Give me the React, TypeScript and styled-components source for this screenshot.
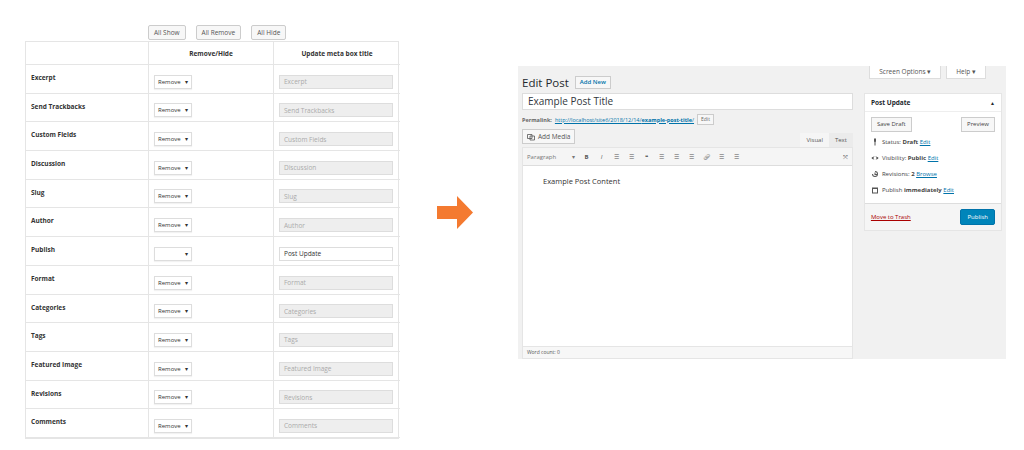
import React from "react";
import styled, { createGlobalStyle } from "styled-components";

const G = createGlobalStyle`
  body{margin:0;background:#fff;font-family:"Open Sans","Noto Sans",sans-serif;overflow:hidden;}
  #root{width:1024px;height:450px;overflow:hidden;}
`;
const Page = styled.div`display:flex;align-items:flex-start;height:450px;`;
const Left = styled.div`margin:25px 0 0 25px;width:374px;display:flex;flex-direction:column;`;
const TopBtns = styled.div`display:flex;gap:10px;padding-left:123px;height:16px;`;
const SmallBtn = styled.div`font-size:6.5px;color:#555;border:1px solid #ccc;background:#f7f7f7;padding:0 5px;height:13px;line-height:13px;border-radius:2px;`;
const Table = styled.div`display:grid;grid-template-columns:123px 125px 126px;border:1px solid #e5e5e5;`;
const Cell = styled.div<{ $h?: boolean }>`height:${p => (p.$h ? 23 : 28.7)}px;border-bottom:1px solid #e5e5e5;border-right:1px solid #e5e5e5;font-size:6.5px;display:flex;padding:0 5px;box-sizing:border-box;
  &:nth-child(3n){border-right:none;}`;
const HeadCell = styled(Cell)`justify-content:center;align-items:center;font-weight:700;color:#333;`;
const Label = styled(Cell)`font-weight:700;color:#333;padding-top:8px;`;
const Ctl = styled(Cell)`align-items:flex-end;padding-bottom:4px;`;
const Select = styled.div`width:38px;height:14px;border:1px solid #ddd;box-sizing:border-box;font-size:6px;color:#333;display:flex;align-items:center;justify-content:space-between;padding:0 3px;box-shadow:0 1px 1px rgba(0,0,0,.05);`;
const Input = styled.div<{ $on?: boolean }>`width:114px;height:14px;box-sizing:border-box;border:1px solid #ddd;background:${p => (p.$on ? "#fff" : "#eee")};color:${p => (p.$on ? "#333" : "#aaa")};font-size:6.5px;padding:0 4px;display:flex;align-items:center;`;
const ArrowWrap = styled.div`margin:196px 0 0 38px;width:36px;height:33px;`;
const Admin = styled.div`margin:66px 0 0 45px;width:488px;height:293px;background:#f1f1f1;display:flex;flex-direction:column;padding:0 4px;box-sizing:border-box;font-family:"Open Sans",sans-serif;`;
const TopRight = styled.div`display:flex;justify-content:flex-end;gap:5px;padding-right:16px;height:12px;`;
const Tab = styled.div`background:#fff;border:1px solid #ddd;border-top:none;font-size:6.5px;color:#555;padding:0 9px;height:12px;line-height:12px;`;
const HeadRow = styled.div`display:flex;align-items:center;gap:6px;margin-top:-3px;height:14px;`;
const H1 = styled.div`font-size:11.5px;color:#23282d;`;
const AddNew = styled.div`font-size:6px;color:#0073aa;border:1px solid #ccc;background:#f7f7f7;padding:0 4px;height:11px;line-height:11px;font-weight:600;`;
const Cols = styled.div`display:flex;gap:11px;margin-top:4px;flex:1;`;
const Main = styled.div`width:333px;display:flex;flex-direction:column;`;
const Title = styled.div`height:17px;background:#fff;border:1px solid #ddd;box-sizing:border-box;font-size:10px;color:#32373c;padding:0 5px;line-height:15px;`;
const Perma = styled.div`font-size:5.5px;color:#666;display:flex;align-items:center;gap:3px;margin-top:3px;height:13px;
  b{font-weight:700;} a{color:#0073aa;text-decoration:underline;}`;
const TinyBtn = styled.span`border:1px solid #ccc;background:#f7f7f7;padding:0 3px;height:9px;line-height:9px;font-size:5px;`;
const MediaRow = styled.div`display:flex;justify-content:space-between;align-items:flex-end;margin-top:3px;`;
const MediaBtn = styled.div`border:1px solid #ccc;background:#f7f7f7;font-size:6.5px;color:#555;height:13px;padding:0 4px;display:flex;align-items:center;gap:3px;margin-bottom:3px;`;
const Tabs = styled.div`display:flex;`;
const VT = styled.div<{ $a?: boolean }>`font-size:6px;color:#555;background:${p => (p.$a ? "#f5f5f5" : "#ebebeb")};padding:0 6px;height:14px;line-height:14px;`;
const Editor = styled.div`flex:1;display:flex;flex-direction:column;border:1px solid #e5e5e5;background:#fff;`;
const Toolbar = styled.div`height:17px;background:#f5f5f5;border-bottom:1px solid #ddd;display:flex;align-items:center;padding:0 4px;gap:8px;font-size:6px;color:#555;`;
const Para = styled.div`width:48px;display:flex;justify-content:space-between;color:#777;`;
const Content = styled.div`flex:1;padding:10px 20px;font-size:7.5px;color:#333;`;
const Foot = styled.div`height:11px;background:#f7f7f7;border-top:1px solid #e5e5e5;font-size:5px;color:#555;padding:0 4px;line-height:11px;`;
const Side = styled.div`width:137px;align-self:flex-start;background:#fff;border:1px solid #e5e5e5;font-size:6px;color:#444;`;
const BoxHead = styled.div`height:17px;border-bottom:1px solid #eee;display:flex;justify-content:space-between;align-items:center;padding:0 6px;font-weight:700;font-size:6.5px;color:#23282d;`;
const BtnRow = styled.div`display:flex;justify-content:space-between;padding:5px 6px 2px;`;
const MiscRow = styled.div`display:flex;align-items:center;gap:3px;padding:4px 6px 4px 6px;height:8px;a{color:#0073aa;text-decoration:underline;}`;
const Actions = styled.div`margin-top:5px;background:#f5f5f5;border-top:1px solid #ddd;display:flex;justify-content:space-between;align-items:center;padding:5px 6px;
  a{color:#a00;text-decoration:underline;}`;
const Publish = styled.div`background:#0085ba;color:#fff;border:1px solid #0073aa;padding:0 6px;height:14px;line-height:14px;font-size:6px;border-radius:2px;`;

const rows = ["Excerpt","Send Trackbacks","Custom Fields","Discussion","Slug","Author","Publish","Format","Categories","Tags","Featured Image","Revisions","Comments"];

const Ico = ({ d }: { d: React.ReactNode }) => <svg width="8" height="8" viewBox="0 0 16 16" fill="#555">{d}</svg>;
const toolbar = ["B","I","ul","ol","q","l","c","r","k","h","t"];

export default function App() {
  return (<>
    <G />
    <Page>
      <Left>
        <TopBtns><SmallBtn>All Show</SmallBtn><SmallBtn>All Remove</SmallBtn><SmallBtn>All Hide</SmallBtn></TopBtns>
        <Table>
          <HeadCell $h /><HeadCell $h>Remove/Hide</HeadCell><HeadCell $h>Update meta box title</HeadCell>
          {rows.map(r => (<React.Fragment key={r}>
            <Label>{r}</Label>
            <Ctl><Select><span>{r === "Publish" ? "" : "Remove"}</span><span>▾</span></Select></Ctl>
            <Ctl><Input $on={r === "Publish"}>{r === "Publish" ? "Post Update" : r}</Input></Ctl>
          </React.Fragment>))}
        </Table>
      </Left>
      <ArrowWrap><svg width="36" height="33" viewBox="0 0 36 33"><path d="M0 10H20V0L36 16.5L20 33V23H0Z" fill="#f47a30"/></svg></ArrowWrap>
      <Admin>
        <TopRight><Tab>Screen Options ▾</Tab><Tab>Help ▾</Tab></TopRight>
        <HeadRow><H1>Edit Post</H1><AddNew>Add New</AddNew></HeadRow>
        <Cols>
          <Main>
            <Title>Example Post Title</Title>
            <Perma><b>Permalink:</b><a>http://localhost/site6/2018/12/14/<b>example-post-title</b>/</a><TinyBtn>Edit</TinyBtn></Perma>
            <MediaRow>
              <MediaBtn><Ico d={<path d="M1 3h9v8H1zM6 6h9v8H6z" fill="none" stroke="#555" strokeWidth="1.6"/>} />Add Media</MediaBtn>
              <Tabs><VT $a>Visual</VT><VT>Text</VT></Tabs>
            </MediaRow>
            <Editor>
              <Toolbar>
                <Para><span>Paragraph</span><span>▾</span></Para>
                {toolbar.map((t, i) => <span key={i} style={{ fontWeight: t === "B" ? 700 : 400, fontStyle: t === "I" ? "italic" : "normal", width: 7, textAlign: "center" }}>{t === "B" || t === "I" ? t : t === "q" ? "❝" : t === "k" ? "🔗︎" : "☰"}</span>)}
                <span style={{ marginLeft: "auto" }}>⤧</span>
              </Toolbar>
              <Content>Example Post Content</Content>
              <Foot>Word count: 0</Foot>
            </Editor>
          </Main>
          <Side>
            <BoxHead><span>Post Update</span><span style={{ fontSize: 5 }}>▲</span></BoxHead>
            <BtnRow><TinyBtn style={{ fontSize: 6, height: 13, lineHeight: "13px", padding: "0 5px" }}>Save Draft</TinyBtn><TinyBtn style={{ fontSize: 6, height: 13, lineHeight: "13px", padding: "0 5px" }}>Preview</TinyBtn></BtnRow>
            <MiscRow><Ico d={<path d="M6 1h4v6l-1 1v7H7V8L6 7z"/>} /><span>Status: <b>Draft</b> <a>Edit</a></span></MiscRow>
            <MiscRow><Ico d={<path d="M1 8c2-4 12-4 14 0c-2 4-12 4-14 0zM8 5a3 3 0 1 0 0 6a3 3 0 1 0 0-6z"/>} /><span>Visibility: <b>Public</b> <a>Edit</a></span></MiscRow>
            <MiscRow><Ico d={<path d="M8 2a6 6 0 1 1-6 6h2a4 4 0 1 0 4-4zM7 5h2v3h3v2H7z"/>} /><span>Revisions: <b>2</b> <a>Browse</a></span></MiscRow>
            <MiscRow><Ico d={<path d="M2 3h12v12H2zM4 6v7h8V6z"/>} /><span>Publish <b>immediately</b> <a>Edit</a></span></MiscRow>
            <Actions><a>Move to Trash</a><Publish>Publish</Publish></Actions>
          </Side>
        </Cols>
      </Admin>
    </Page>
  </>);
}
